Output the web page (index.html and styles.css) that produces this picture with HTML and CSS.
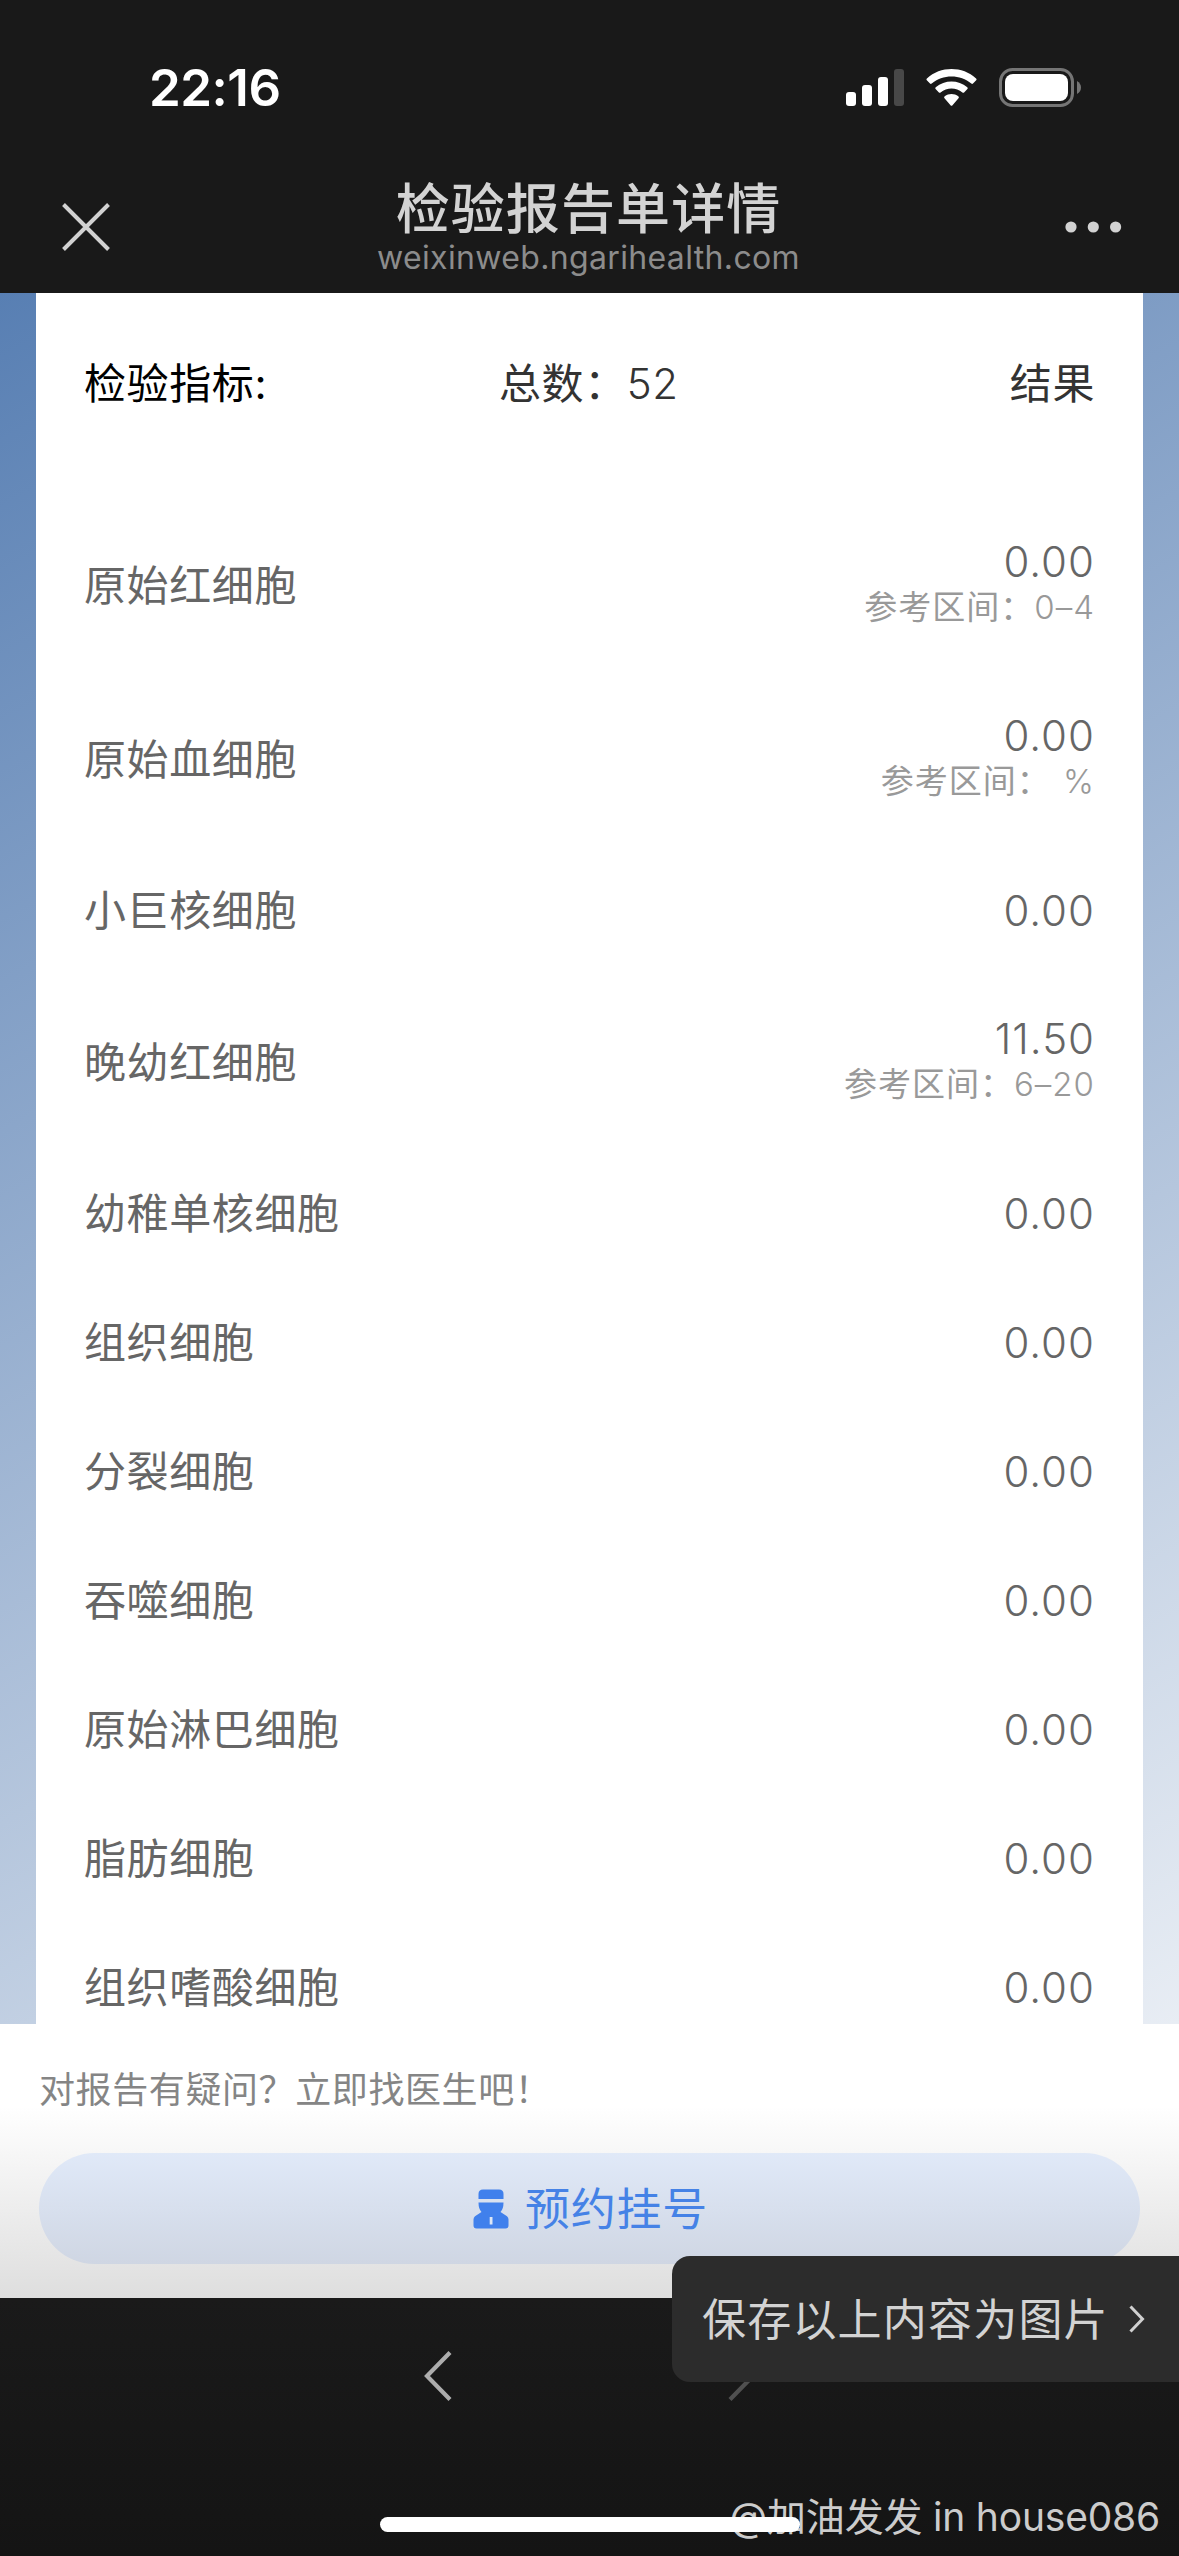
FILE: index.html
```html
<!DOCTYPE html>
<html lang="zh-CN">
<head>
<meta charset="utf-8">
<title>检验报告单详情</title>
<link rel="stylesheet" href="styles.css">
</head>
<body>
<div class="screen">
  <header class="top">
    <div class="status">
      <span class="time">22:16</span>
      <svg class="status-icons" width="236" height="40" viewBox="0 0 236 40">
        <g fill="#fff">
          <rect x="0" y="24" width="10" height="14" rx="3"/>
          <rect x="16" y="17" width="10" height="21" rx="3"/>
          <rect x="32" y="9" width="10" height="29" rx="3"/>
          <rect x="48" y="1" width="10" height="37" rx="3" fill="#484848"/>
          <path d="M80.8 12.2Q80 11.3 80.9 10.4C94.500 -2.200 116.500 -2.200 130.100 10.400Q131 11.300 130.200 12.200L127 15.600Q126.200 16.400 125.300 15.600C114.500 6 96.500 6 85.700 15.600Q84.800 16.400 84 15.600Z"/>
          <path d="M89.600 21Q88.800 20.200 89.700 19.300C98.800 11.400 112.200 11.400 121.300 19.300Q122.200 20.200 121.400 21L118.100 24.400Q117.300 25.200 116.400 24.400C110.200 19.200 100.800 19.200 94.600 24.400Q93.700 25.200 92.900 24.400Z"/>
          <path d="M98.500 30.200Q97.500 29.200 98.700 28.300C102.700 25.300 108.300 25.300 112.300 28.300Q113.500 29.200 112.500 30.200L106.500 37.200Q105.500 38.200 104.500 37.200Z"/>
          <rect x="159" y="6" width="63" height="27" rx="8"/>
          <path d="M231 13Q235 15.500 235 19.500T231 26Z" fill="#757575"/>
        </g>
        <rect x="154.500" y="1.500" width="72" height="36" rx="12" fill="none" stroke="#757575" stroke-width="3"/>
      </svg>
    </div>
    <div class="nav">
      <svg width="48" height="48" viewBox="0 0 48 48" fill="none" stroke="#d2d2d2" stroke-width="4"><path d="M1.500 1.500 46.500 46.500M46.500 1.500 1.500 46.500"/></svg>
      <div class="heading">
        <h1 class="title">检验报告单详情</h1>
        <div class="url">weixinweb.ngarihealth.com</div>
      </div>
      <svg width="57" height="12" viewBox="0 0 57 12" fill="#d2d2d2"><circle cx="6" cy="6" r="5.600"/><circle cx="28.300" cy="6" r="5.600"/><circle cx="50.600" cy="6" r="5.600"/></svg>
    </div>
  </header>

  <main class="report">
    <section class="card">
      <div class="card-head">
        <span class="label">检验指标:</span>
        <span class="total">总数：<span class="num">52</span></span>
        <span class="result">结果</span>
      </div>
      <ul class="rows">
        <li class="row tall"><span class="name">原始红细胞</span><div class="value">0.00<small class="range">参考区间：<span class="num">0–4</span></small></div></li>
        <li class="row tall"><span class="name">原始血细胞</span><div class="value">0.00<small class="range">参考区间： <span class="num">%</span></small></div></li>
        <li class="row"><span class="name">小巨核细胞</span><div class="value">0.00</div></li>
        <li class="row tall"><span class="name">晚幼红细胞</span><div class="value">11.50<small class="range">参考区间：<span class="num">6–20</span></small></div></li>
        <li class="row"><span class="name">幼稚单核细胞</span><div class="value">0.00</div></li>
        <li class="row"><span class="name">组织细胞</span><div class="value">0.00</div></li>
        <li class="row"><span class="name">分裂细胞</span><div class="value">0.00</div></li>
        <li class="row"><span class="name">吞噬细胞</span><div class="value">0.00</div></li>
        <li class="row"><span class="name">原始淋巴细胞</span><div class="value">0.00</div></li>
        <li class="row"><span class="name">脂肪细胞</span><div class="value">0.00</div></li>
        <li class="row"><span class="name">组织嗜酸细胞</span><div class="value">0.00</div></li>
      </ul>
    </section>
  </main>

  <section class="consult">
    <p class="question">对报告有疑问？立即找医生吧！</p>
    <div class="book">
      <svg width="36" height="40" viewBox="0 0 36 40" fill="#4080ec">
        <path d="M5.500 10V5Q5.500 .5 10 .5H26Q30.500 .5 30.500 5V10Z"/>
        <path d="M5.500 13.500H30.500Q30.500 20 27.500 23L34 27.200Q35.500 28.500 35.500 30.500V36.500Q35.500 39.500 32.500 39.500H3.500Q.5 39.500 .5 36.500V30.500Q.5 28.500 2 27.200L8.500 23Q5.500 20 5.500 13.500Z"/>
        <rect x="16.700" y="28" width="2.800" height="7.500" fill="#dce6f5"/>
      </svg>
      <span class="book-text">预约挂号</span>
    </div>
  </section>

  <footer class="toolbar">
    <svg width="28" height="50" viewBox="0 0 28 50" fill="none" stroke="#adadad" stroke-width="4.200"><path d="M26 1.500 3 25 26 48.500"/></svg>
    <svg width="28" height="50" viewBox="0 0 28 50" fill="none" stroke="#505050" stroke-width="4.200"><path d="M2 1.500 25 25 2 48.500"/></svg>
  </footer>

  <div class="save">
    <span class="save-text">保存以上内容为图片</span>
    <svg width="16" height="28" viewBox="0 0 16 28" fill="none" stroke="#d0d0d0" stroke-width="3"><path d="M1.500 1.500 13.500 14 1.500 26.500"/></svg>
  </div>
  <div class="watermark">@加油发发 in house086</div>
  <div class="home-bar"></div>
</div>
</body>
</html>
```
FILE: styles.css
```css
* { box-sizing: border-box; }

body { margin: 0; }

.screen {
  position: relative;
  display: flex;
  flex-direction: column;
  width: 1179px;
  height: 2556px;
  overflow: hidden;
  background: #191919;
  font-family: Inter, "Noto Sans CJK SC", sans-serif;
  font-weight: 400;
  white-space: nowrap;
}

.top { height: 293px; flex: none; }

.status {
  display: flex;
  justify-content: space-between;
  align-items: center;
  height: 174px;
  margin-bottom: 2px;
  padding: 0 97px 0 149px;
  color: #fff;
}

.status-icons { margin-top: 2px; }

.time { font-size: 51px; font-weight: 600; letter-spacing: -0.5px; }

.nav {
  display: flex;
  justify-content: space-between;
  align-items: center;
  height: 101px;
  padding: 0 57px 0 62px;
}

.heading { padding-left: 2px; text-align: center; }

.title {
  margin: 0;
  font-size: 54px;
  font-weight: 500;
  line-height: 62px;
  letter-spacing: 1.1px;
  color: #d3d3d3;
}

.url {
  font-size: 32px;
  line-height: 34px;
  letter-spacing: 0.35px;
  color: #8c8c8c;
}

.report {
  height: 1731px;
  flex: none;
  overflow: hidden;
  padding: 0 36px;
  background: linear-gradient(151.500deg, #587fb3, #e8edf4);
}

.card { height: 100%; padding: 0 48px; background: #fff; }

.card-head {
  display: grid;
  grid-template-columns: 415px 1fr auto;
  align-items: center;
  height: 175px;
  margin-bottom: 29px;
  font-size: 42px;
  letter-spacing: 0.6px;
  color: #333;
}

.label { color: #000; }

.num { font-weight: 300; }

.rows { margin: 0; padding: 0; list-style: none; }

.row {
  display: flex;
  justify-content: space-between;
  align-items: center;
  height: 129px;
  font-size: 42px;
  letter-spacing: 0.6px;
  color: #666;
}

.tall { height: 174px; }

.name { padding-bottom: 4px; }

.value {
  display: flex;
  flex-direction: column;
  align-items: flex-end;
  padding-top: 1px;
  font-weight: 300;
  line-height: 45px;
  letter-spacing: 1px;
}

.range {
  font-size: 33px;
  font-weight: 400;
  letter-spacing: 1px;
  word-spacing: 2px;
  line-height: 46px;
  color: #999;
}

.consult {
  display: flex;
  flex-direction: column;
  height: 274px;
  flex: none;
  padding: 0 39px;
  background: linear-gradient(#fff 30%, #f3f3f3 55%, #dedede);
}

.question {
  margin: 0;
  height: 129px;
  padding-top: 2px;
  font-size: 36px;
  line-height: 129px;
  letter-spacing: 0.6px;
  color: #858585;
}

.book {
  display: flex;
  justify-content: center;
  align-items: center;
  gap: 16px;
  height: 111px;
  padding-left: 2px;
  border-radius: 56px;
  background: linear-gradient(#e0e9f8, #cfd6e3);
  font-size: 45px;
  letter-spacing: 0.8px;
  color: #4582e6;
}

.book-text { padding-bottom: 4px; }

.toolbar {
  display: flex;
  gap: 276px;
  flex: 1;
  padding: 53px 0 0 424px;
  background: linear-gradient(#1a1a1a, #141414);
}

.save {
  position: absolute;
  top: 2256px;
  right: 0;
  display: flex;
  justify-content: space-between;
  align-items: center;
  width: 507px;
  height: 126px;
  padding: 0 34px 0 30px;
  border-radius: 18px 0 0 18px;
  background: #2c2c2c;
  font-size: 44px;
  letter-spacing: 1.2px;
  color: #d3d3d3;
}

.save-text { padding-bottom: 5px; }

.watermark {
  position: absolute;
  right: 19px;
  bottom: 12px;
  font-size: 39px;
  line-height: 54px;
  letter-spacing: -0.2px;
  color: #ccc;
}

.home-bar {
  position: absolute;
  left: 380px;
  bottom: 24px;
  width: 420px;
  height: 15px;
  border-radius: 8px;
  background: #fff;
}
```
